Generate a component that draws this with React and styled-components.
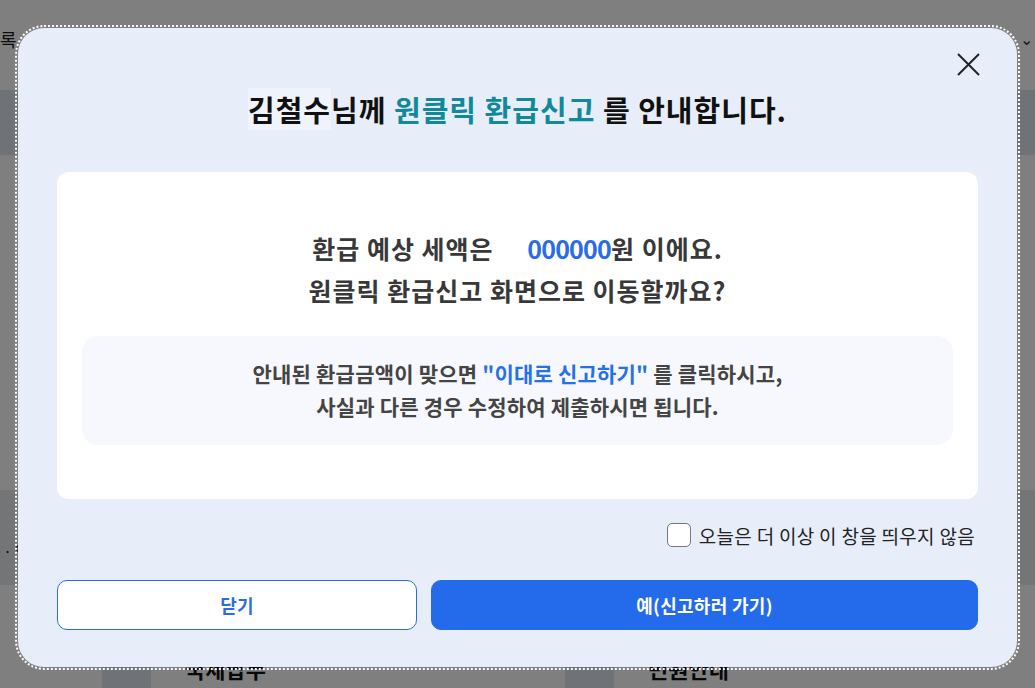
import React, { useState } from "react";
import styled, { createGlobalStyle } from "styled-components";

const Global = createGlobalStyle`
  html, body { margin: 0; padding: 0; }
  body {
    font-family: "Noto Sans CJK KR", "Noto Sans", sans-serif;
    background: #fff;
    overflow: hidden;
  }
  * { box-sizing: border-box; }
`;

/* ---------- backdrop page ---------- */
const Page = styled.div`
  width: 1035px;
  height: 688px;
  display: flex;
  flex-direction: column;
  background: #fff;
  overflow: hidden;
  & > * { flex-shrink: 0; }
`;
const TopBar = styled.div`
  height: 90px;
  display: flex;
  justify-content: space-between;
  align-items: flex-start;
  padding-top: 26px;
  font-size: 18px;
  color: #1a1a1a;
`;
const EdgeText = styled.span`
  margin-left: 0;
`;
const Chevron = styled.span`
  margin-right: 2px;
  font-size: 16px;
  color: #333;
`;
const Banner = styled.div`
  height: 65px;
  background: #dfe5ec;
`;
const Blank = styled.div`
  height: ${(p) => p.$h}px;
`;
const Notice = styled.div`
  height: 95px;
  background: #e7eaef;
  display: flex;
  align-items: center;
  padding-top: 26px;
  font-size: 16px;
  color: #222;
`;
const Cards = styled.div`
  display: flex;
  padding-left: 102px;
`;
const Card = styled.div`
  display: flex;
  gap: 34px;
  width: 463px;
`;
const Thumb = styled.div`
  width: 49px;
  height: 60px;
  background: #dfe5ec;
`;
const CardTitle = styled.div`
  font-size: 22px;
  line-height: 26px;
  font-weight: 700;
  color: #111;
`;

const Overlay = styled.div`
  position: fixed;
  inset: 0;
  background: rgba(0, 0, 0, 0.5);
  display: flex;
  justify-content: center;
  align-items: flex-start;
  padding-top: 28px;
`;

/* ---------- modal ---------- */
const Modal = styled.div`
  position: relative;
  width: 999px;
  background: #e8eef9;
  border-radius: 26px;
  outline: 2px dotted #fff;
  outline-offset: 1px;
  padding: 61px 39px 37px;
  display: flex;
  flex-direction: column;
`;
const CloseButton = styled.button`
  position: absolute;
  top: 23px;
  right: 36px;
  width: 26px;
  height: 26px;
  padding: 0;
  border: 0;
  background: transparent;
  cursor: pointer;
  display: flex;
  align-items: center;
  justify-content: center;
`;
const Title = styled.h2`
  margin: 0;
  text-align: center;
  font-size: 29px;
  letter-spacing: 1px;
  line-height: 40px;
  font-weight: 700;
  color: #111;
`;
const NameMark = styled.span`
  background: #eff3fc;
`;
const Teal = styled.span`
  color: #11899a;
`;
const Body = styled.div`
  margin-top: 43px;
  background: #fff;
  border-radius: 12px;
  padding: 55px 25px 54px;
`;
const Question = styled.p`
  margin: 0;
  text-align: center;
  font-size: 25px;
  letter-spacing: 1px;
  line-height: 42px;
  font-weight: 700;
  color: #383838;
`;
const Amount = styled.span`
  color: #2a6be6;
  margin-left: 27px;
  letter-spacing: -0.8px;
`;
const InfoBox = styled.div`
  margin-top: 25px;
  background: #f6f8fd;
  border-radius: 16px;
  padding: 21px 20px 22px;
  text-align: center;
  font-size: 21px;
  letter-spacing: 0.2px;
  line-height: 33px;
  font-weight: 600;
  color: #444;
`;
const Blue = styled.span`
  color: #2670e8;
`;
const CheckRow = styled.label`
  margin-top: 23px;
  align-self: flex-end;
  margin-right: 3px;
  height: 26px;
  display: flex;
  align-items: center;
  gap: 8px;
  font-size: 19px;
  letter-spacing: 0.3px;
  color: #222;
  cursor: pointer;
`;
const Check = styled.input`
  appearance: none;
  margin: 0;
  width: 24px;
  height: 24px;
  border: 1px solid #777;
  border-radius: 5px;
  background: #fff;
  &:checked {
    background: #246beb;
    border-color: #246beb;
  }
`;
const Actions = styled.div`
  margin-top: 32px;
  display: flex;
  gap: 14px;
`;
const Button = styled.button`
  height: 50px;
  border-radius: 10px;
  font-family: inherit;
  font-size: 18px;
  letter-spacing: 0.3px;
  font-weight: ${(p) => (p.$primary ? 700 : 600)};
  cursor: pointer;
  border: 1px solid ${(p) => (p.$primary ? "#246beb" : "#2a6de0")};
  background: ${(p) => (p.$primary ? "#246beb" : "#fff")};
  color: ${(p) => (p.$primary ? "#fff" : "#2a6de0")};
  width: ${(p) => p.$w}px;
`;

export default function App() {
  const [checked, setChecked] = useState(false);
  return (
    <>
      <Global />
      <Page>
        <TopBar>
          <EdgeText>록</EdgeText>
          <Chevron>⌄</Chevron>
        </TopBar>
        <Banner />
        <Blank $h={335} />
        <Notice>
          <EdgeText>ㆍ얻</EdgeText>
        </Notice>
        <Blank $h={70} />
        <Cards>
          <Card>
            <Thumb />
            <CardTitle>국세납부</CardTitle>
          </Card>
          <Card>
            <Thumb />
            <CardTitle>민원안내</CardTitle>
          </Card>
        </Cards>
      </Page>
      <Overlay>
        <Modal role="dialog" aria-modal="true">
          <CloseButton aria-label="닫기">
            <svg width="24" height="24" viewBox="0 0 24 24" fill="none">
              <path d="M2 2L23 23M23 2L2 23" stroke="#222" strokeWidth="2" />
            </svg>
          </CloseButton>
          <Title>
            <NameMark>김철수</NameMark>님께 <Teal>원클릭 환급신고</Teal> 를 안내합니다.
          </Title>
          <Body>
            <Question>
              환급 예상 세액은 <Amount>000000</Amount>원 이에요.
            </Question>
            <Question>원클릭 환급신고 화면으로 이동할까요?</Question>
            <InfoBox>
              안내된 환급금액이 맞으면 <Blue>"이대로 신고하기"</Blue> 를 클릭하시고,
              <br />
              사실과 다른 경우 수정하여 제출하시면 됩니다.
            </InfoBox>
          </Body>
          <CheckRow>
            <Check
              type="checkbox"
              checked={checked}
              onChange={(e) => setChecked(e.target.checked)}
            />
            오늘은 더 이상 이 창을 띄우지 않음
          </CheckRow>
          <Actions>
            <Button $w={360}>닫기</Button>
            <Button $primary $w={547}>예(신고하러 가기)</Button>
          </Actions>
        </Modal>
      </Overlay>
    </>
  );
}
